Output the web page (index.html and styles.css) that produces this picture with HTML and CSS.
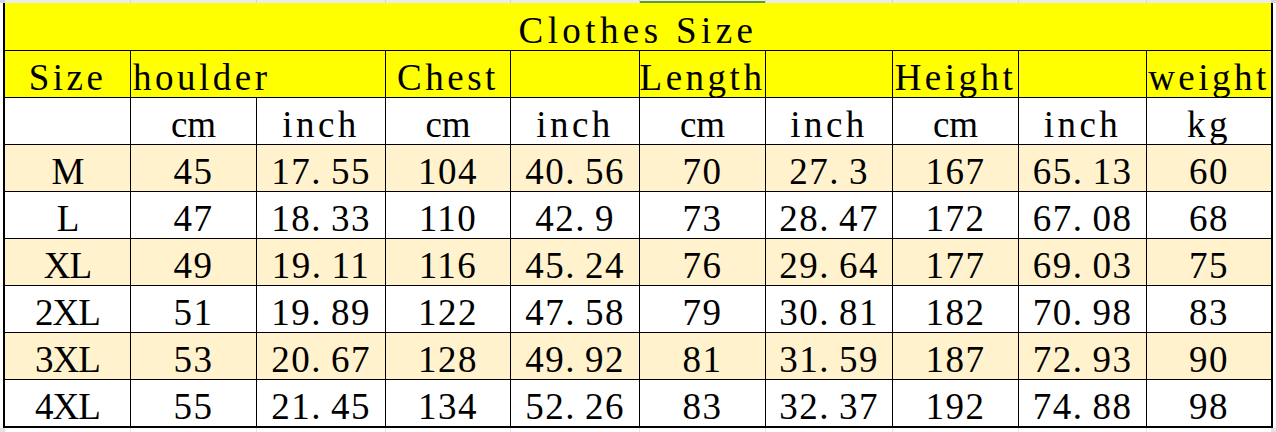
FILE: index.html
```html
<!DOCTYPE html>
<html>
<head>
<meta charset="utf-8">
<title>Clothes Size</title>
<link rel="stylesheet" href="styles.css">
</head>
<body>
<div class="topbar">
  <div class="seg"></div><div class="seg"></div><div class="seg"></div><div class="seg"></div><div class="seg"></div>
  <div class="seg sel"></div><div class="seg"></div><div class="seg"></div><div class="seg"></div><div class="seg"></div>
</div>
<div class="sheet">
  <div class="c title">Clothes Size</div>

  <div class="c hd txt">Size</div>
  <div class="c hd span2 txt">houlder</div>
  <div class="c hd txt">Chest</div>
  <div class="c hd"></div>
  <div class="c hd txt">Length</div>
  <div class="c hd"></div>
  <div class="c hd txt">Height</div>
  <div class="c hd"></div>
  <div class="c hd txt">weight</div>

  <div class="c"></div>
  <div class="c cm">cm</div><div class="c txt">inch</div>
  <div class="c cm">cm</div><div class="c txt">inch</div>
  <div class="c cm">cm</div><div class="c txt">inch</div>
  <div class="c cm">cm</div><div class="c txt">inch</div>
  <div class="c txt">kg</div>

  <div class="c alt lbl">M</div>
  <div class="c alt num">45</div><div class="c alt num">17<span class="dot">.</span>55</div>
  <div class="c alt num">104</div><div class="c alt num">40<span class="dot">.</span>56</div>
  <div class="c alt num">70</div><div class="c alt num">27<span class="dot">.</span>3</div>
  <div class="c alt num">167</div><div class="c alt num">65<span class="dot">.</span>13</div>
  <div class="c alt num">60</div>

  <div class="c lbl">L</div>
  <div class="c num">47</div><div class="c num">18<span class="dot">.</span>33</div>
  <div class="c num">110</div><div class="c num">42<span class="dot">.</span>9</div>
  <div class="c num">73</div><div class="c num">28<span class="dot">.</span>47</div>
  <div class="c num">172</div><div class="c num">67<span class="dot">.</span>08</div>
  <div class="c num">68</div>

  <div class="c alt lbl">XL</div>
  <div class="c alt num">49</div><div class="c alt num">19<span class="dot">.</span>11</div>
  <div class="c alt num">116</div><div class="c alt num">45<span class="dot">.</span>24</div>
  <div class="c alt num">76</div><div class="c alt num">29<span class="dot">.</span>64</div>
  <div class="c alt num">177</div><div class="c alt num">69<span class="dot">.</span>03</div>
  <div class="c alt num">75</div>

  <div class="c lbl">2XL</div>
  <div class="c num">51</div><div class="c num">19<span class="dot">.</span>89</div>
  <div class="c num">122</div><div class="c num">47<span class="dot">.</span>58</div>
  <div class="c num">79</div><div class="c num">30<span class="dot">.</span>81</div>
  <div class="c num">182</div><div class="c num">70<span class="dot">.</span>98</div>
  <div class="c num">83</div>

  <div class="c alt lbl">3XL</div>
  <div class="c alt num">53</div><div class="c alt num">20<span class="dot">.</span>67</div>
  <div class="c alt num">128</div><div class="c alt num">49<span class="dot">.</span>92</div>
  <div class="c alt num">81</div><div class="c alt num">31<span class="dot">.</span>59</div>
  <div class="c alt num">187</div><div class="c alt num">72<span class="dot">.</span>93</div>
  <div class="c alt num">90</div>

  <div class="c lbl">4XL</div>
  <div class="c num">55</div><div class="c num">21<span class="dot">.</span>45</div>
  <div class="c num">134</div><div class="c num">52<span class="dot">.</span>26</div>
  <div class="c num">83</div><div class="c num">32<span class="dot">.</span>37</div>
  <div class="c num">192</div><div class="c num">74<span class="dot">.</span>88</div>
  <div class="c num">98</div>
</div>
<div class="below">
  <div class="seg"></div><div class="seg"></div><div class="seg"></div><div class="seg"></div><div class="seg"></div>
  <div class="seg"></div><div class="seg"></div><div class="seg"></div><div class="seg"></div><div class="seg"></div>
</div>
</body>
</html>
```
FILE: styles.css
```css
html, body {
  margin: 0;
  padding: 0;
  background: #ffffff;
}
body {
  width: 1276px;
  height: 432px;
  overflow: hidden;
  font-family: "Liberation Serif", "Tinos", "DejaVu Serif", serif;
  color: #000;
}
.topbar {
  height: 3px;
  display: grid;
  grid-template-columns: 125px 125px 128px 124px 128px 125px 126px 125px 127px 124px 1fr;
  column-gap: 1px;
  padding-left: 5px;
  background: #d6d6d6;
  box-sizing: border-box;
}
.seg {
  background: #ececec;
}
.seg.sel {
  border-bottom: 2px solid #5a9b3c;
  box-sizing: border-box;
}
.below {
  height: 4px;
  display: grid;
  grid-template-columns: 125px 125px 128px 124px 128px 125px 126px 125px 127px 124px 1fr;
  column-gap: 1px;
  padding-left: 5px;
  background: #e4e4e4;
}
.below .seg {
  background: #ffffff;
}
.sheet {
  margin-left: 3px;
  width: 1270px;
  display: grid;
  grid-template-columns: 125px 125px 128px 124px 128px 125px 126px 125px 127px 124px;
  grid-template-rows: 47px repeat(8, 46px);
  gap: 1px;
  background: #000;
  border-left: 2px solid #000;
  border-right: 2px solid #000;
  border-bottom: 2px solid #000;
  box-sizing: border-box;
}
.c {
  background: #ffffff;
  display: flex;
  align-items: center;
  justify-content: center;
  padding-top: 6px;
  box-sizing: border-box;
  font-family: "Liberation Serif", "Tinos", "DejaVu Serif", serif;
  font-size: 37px;
  white-space: nowrap;
  overflow: hidden;
}
.title {
  grid-column: 1 / span 10;
  background: #ffff00;
  padding-top: 7px;
  letter-spacing: 4.4px;
}
.hd {
  background: #ffff00;
}
.txt {
  letter-spacing: 3.5px;
}
.cm {
  letter-spacing: 0;
}
.lbl {
  letter-spacing: -1px;
}
.num {
  letter-spacing: 1.5px;
}
.dot {
  margin-right: 9px;
}
.alt {
  background: #fff2cc;
}
.span2 {
  grid-column: span 2;
  justify-content: flex-start;
  padding-left: 2px;
}
```
